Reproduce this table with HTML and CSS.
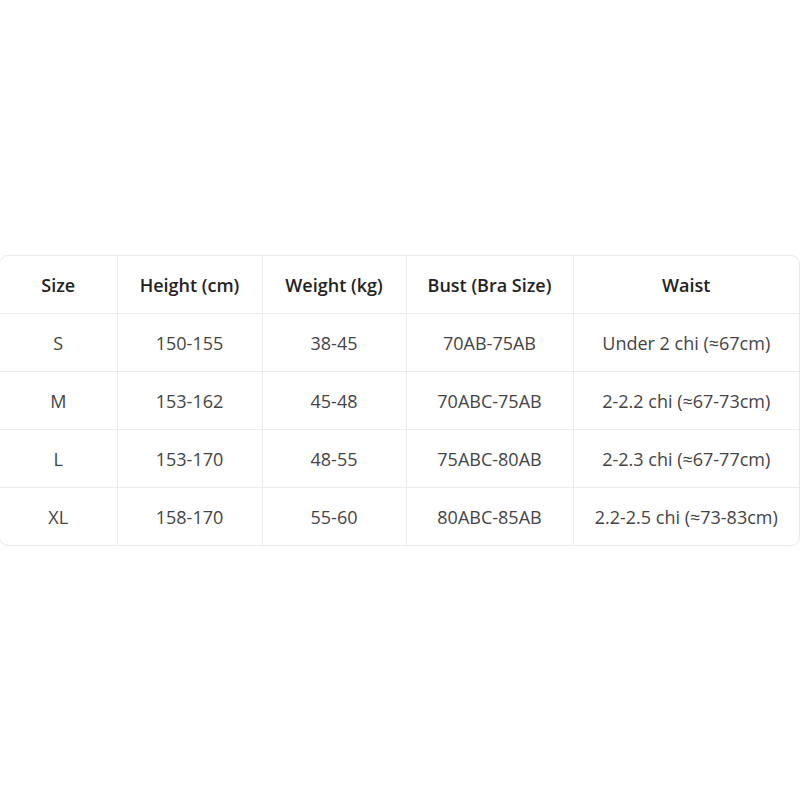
FILE: index.html
```html
<!DOCTYPE html>
<html>
<head>
<meta charset="utf-8">
<link rel="stylesheet" href="styles.css">
</head>
<body>
<div class="wrap">
  <table class="sizes">
    <colgroup>
      <col class="c1"><col class="c2"><col class="c3"><col class="c4"><col class="c5">
    </colgroup>
    <thead>
      <tr><th>Size</th><th>Height (cm)</th><th>Weight (kg)</th><th>Bust (Bra Size)</th><th>Waist</th></tr>
    </thead>
    <tbody>
      <tr><td>S</td><td>150-155</td><td>38-45</td><td>70AB-75AB</td><td>Under 2 chi (≈67cm)</td></tr>
      <tr><td>M</td><td>153-162</td><td>45-48</td><td>70ABC-75AB</td><td>2-2.2 chi (≈67-73cm)</td></tr>
      <tr><td>L</td><td>153-170</td><td>48-55</td><td>75ABC-80AB</td><td>2-2.3 chi (≈67-77cm)</td></tr>
      <tr><td>XL</td><td>158-170</td><td>55-60</td><td>80ABC-85AB</td><td>2.2-2.5 chi (≈73-83cm)</td></tr>
    </tbody>
  </table>
</div>
</body>
</html>
```
FILE: styles.css
```css
html, body {
  margin: 0;
  padding: 0;
  background: #ffffff;
}
body {
  min-height: 100vh;
  display: flex;
  align-items: center;
  font-family: "Open Sans", "Noto Sans", sans-serif;
}
.wrap {
  width: 802px;
  margin-left: -1px;
  border: 1px solid #e9e9e9;
  border-radius: 9px;
  overflow: hidden;
  box-sizing: border-box;
}
.sizes {
  width: 100%;
  border-collapse: collapse;
  table-layout: fixed;
}
.c1 { width: 117px; }
.c2 { width: 145px; }
.c3 { width: 144px; }
.c4 { width: 167px; }
.c5 { width: auto; }
.sizes th, .sizes td {
  text-align: center;
  font-size: 18px;
  line-height: 24px;
  border-left: 1px solid #ebebeb;
  border-top: 1px solid #ebebeb;
  padding: 2px 0 0 0;
}
.sizes tr > :first-child { border-left: none; }
.sizes thead tr > * { border-top: none; }
.sizes th {
  height: 55px;
  font-weight: 600;
  color: #222222;
}
.sizes td {
  height: 55px;
  color: #444444;
}
```
